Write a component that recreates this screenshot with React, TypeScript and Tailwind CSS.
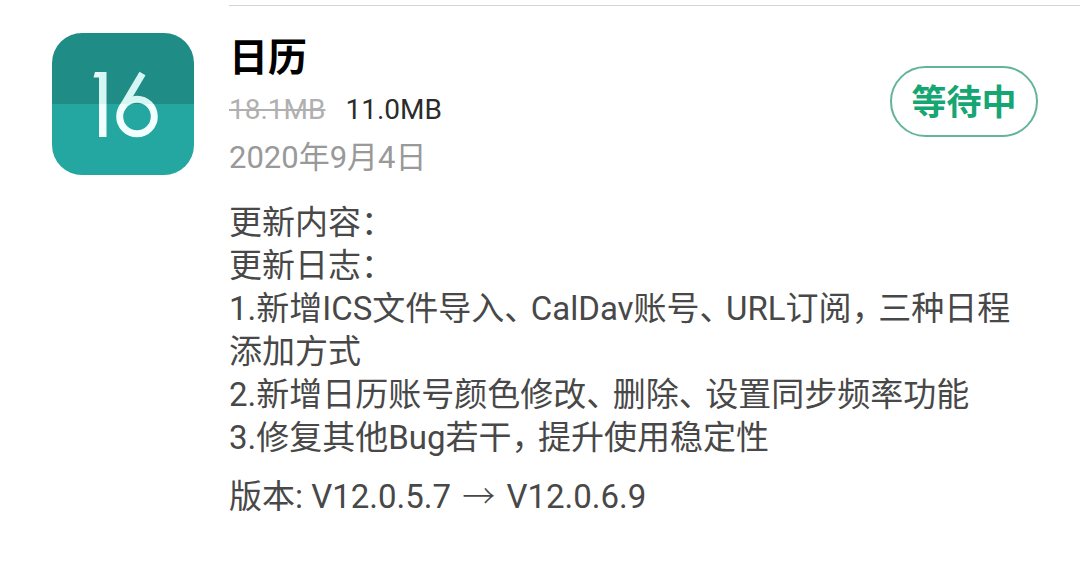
import { Fragment } from 'react';

// A bar marks a preferred place for a line break.
const changes = [
  '更新内容：',
  '更新日志：',
  '1.新增ICS文件导入、CalDav账号、URL订阅，三种日程|添加方式',
  '2.新增日历账号颜色修改、删除、设置同步频率功能',
  '3.修复其他Bug若干，提升使用稳定性',
];

function CalendarIcon() {
  return (
    <svg viewBox="0 0 142 142" className="size-[142px] shrink-0" role="img" aria-label="日历">
      <defs>
        <clipPath id="tile">
          <rect width="142" height="142" rx="30" />
        </clipPath>
        <linearGradient id="ink" gradientUnits="userSpaceOnUse" x1="0" y1="0" x2="0" y2="142">
          <stop offset="0.5" stopColor="#d6f6f3" />
          <stop offset="0.5" stopColor="#f1fffe" />
        </linearGradient>
      </defs>
      <g clipPath="url(#tile)">
        <rect width="142" height="71" fill="#1f8c86" />
        <rect y="71" width="142" height="71" fill="#24a6a1" />
      </g>
      <rect x="47" y="39" width="7.5" height="65" fill="url(#ink)" />
      <polygon points="43,39 48,39 48,44.5 41.5,44.5" fill="#e4fbf9" />
      <g fill="none" stroke="url(#ink)" strokeWidth="7">
        <circle cx="85" cy="83.5" r="17.3" />
        <line x1="90.5" y1="40.5" x2="69.5" y2="76" />
      </g>
    </svg>
  );
}

/** Sets commas at half width so that they sit closer to the text after them. */
function ChangeLine({ text }: { text: string }) {
  return (
    <p>
      {text.split(/([、，|])/).map((part, i) => {
        if (part === '|') return <wbr key={i} />;
        if (part === '、' || part === '，') {
          return (
            <span key={i} className="mr-2.5 [font-feature-settings:'halt']">
              {part}
            </span>
          );
        }
        return <Fragment key={i}>{part}</Fragment>;
      })}
    </p>
  );
}

export default function App() {
  return (
    <main className="min-h-screen bg-white font-['Roboto','Noto_Sans_CJK_SC',sans-serif]" lang="zh-CN">
      <article className="flex gap-[35px] pt-[5px] pl-[52px]">
        <div className="pt-7">
          <CalendarIcon />
        </div>
        <div className="min-w-0 flex-1 border-t border-[#d4d4d4] pr-[42px]">
          <header className="flex items-start justify-between pt-[25px]">
            <div>
              <h1 className="text-[39px] leading-[54px] font-bold text-black">日历</h1>
              <p className="flex gap-5 text-[28px] leading-[50px] text-[#2b2b2b]">
                <s className="text-[#b0b0b0]">18.1MB</s>
                <span>11.0MB</span>
              </p>
              <p className="text-[31px] leading-[46px] text-[#999999]">2020年9月4日</p>
            </div>
            <button
              type="button"
              className="mt-[35px] h-[71px] w-[148px] rounded-full border-2 border-[#62b598] pt-1 text-[35px] leading-none font-bold text-[#16a673]"
            >
              等待中
            </button>
          </header>
          <div className="mt-5 pr-4 text-[33px] leading-[43px] text-[#484848]">
            {changes.map((line) => (
              <ChangeLine key={line} text={line} />
            ))}
          </div>
          <p className="mt-3.5 text-[33px] leading-[43px] text-[#484848]">
            版本: V12.0.5.7 <span className="mx-[3px] font-['Noto_Sans_CJK_SC',sans-serif] font-light">→</span> V12.0.6.9
          </p>
        </div>
      </article>
    </main>
  );
}
